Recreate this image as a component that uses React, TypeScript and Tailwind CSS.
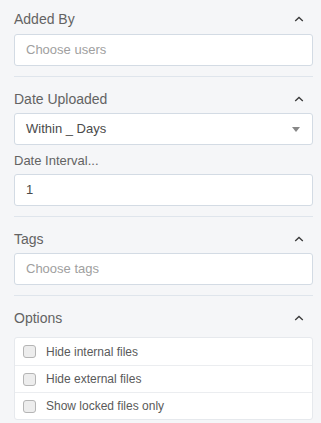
import React from 'react';

const font = { fontFamily: '"Liberation Sans", Arial, sans-serif' };

function ChevronUp() {
  return (
    <svg width="10" height="6" viewBox="0 0 10 6" className="mr-[9px]">
      <polyline points="1.2,5 5,1.5 8.8,5" fill="none" stroke="#3a3a3a" strokeWidth="1.3" />
    </svg>
  );
}

function SectionHeader({ title }: { title: string }) {
  return (
    <div className="flex h-[22px] items-center justify-between">
      <span className="text-[14px] text-[#636363]">{title}</span>
      <ChevronUp />
    </div>
  );
}

function TextBox({ text, placeholder }: { text: string; placeholder?: boolean }) {
  return (
    <div className="flex h-[32px] items-center rounded-[3px] border border-[#d3dbe4] bg-white px-[11px]">
      <span className={placeholder ? 'text-[13px] text-[#a0a0a0]' : 'text-[13px] text-[#4a4a4a]'}>{text}</span>
    </div>
  );
}

const options = ['Hide internal files', 'Hide external files', 'Show locked files only'];

export default function App() {
  return (
    <div className="h-[423px] w-[321px] overflow-hidden bg-[#f5f6f8] pl-[14px] pr-[8px]" style={font}>
      {/* Added By */}
      <div className="border-b border-[#dfe5ec] pt-[8px] pb-[10px]">
        <div className="mb-[4px]">
          <SectionHeader title="Added By" />
        </div>
        <TextBox text="Choose users" placeholder />
      </div>

      {/* Date Uploaded */}
      <div className="border-b border-[#dfe5ec] pt-[11px] pb-[10px]">
        <div className="mb-[3px]">
          <SectionHeader title="Date Uploaded" />
        </div>
        <div className="flex h-[32px] items-center justify-between rounded-[3px] border border-[#d3dbe4] bg-white px-[11px]">
          <span className="text-[13px] text-[#4a4a4a]">Within _ Days</span>
          <svg width="8" height="5" viewBox="0 0 8 5" className="mr-[1px]">
            <polygon points="0,0 8,0 4,5" fill="#888" />
          </svg>
        </div>
        <div className="mt-[5px] mb-[2px] flex h-[22px] items-center">
          <span className="text-[13px] text-[#636363]">Date Interval...</span>
        </div>
        <TextBox text="1" />
      </div>

      {/* Tags */}
      <div className="border-b border-[#dfe5ec] pt-[11px] pb-[10px]">
        <div className="mb-[3px]">
          <SectionHeader title="Tags" />
        </div>
        <TextBox text="Choose tags" placeholder />
      </div>

      {/* Options */}
      <div className="pt-[11px]">
        <SectionHeader title="Options" />
        <div className="mt-[8px] rounded-[3px] border border-[#e6e9ed] bg-white">
          {options.map((label, i) => (
            <div
              key={label}
              className={
                'flex h-[27px] items-center pl-[8px] ' + (i > 0 ? 'border-t border-[#ebedf0]' : '')
              }
            >
              <div className="h-[13px] w-[13px] rounded-[3px] border border-[#b5b5b5] bg-[#ededed]" />
              <span className="ml-[10px] text-[12px] text-[#5a5a5a]">{label}</span>
            </div>
          ))}
        </div>
      </div>
    </div>
  );
}
